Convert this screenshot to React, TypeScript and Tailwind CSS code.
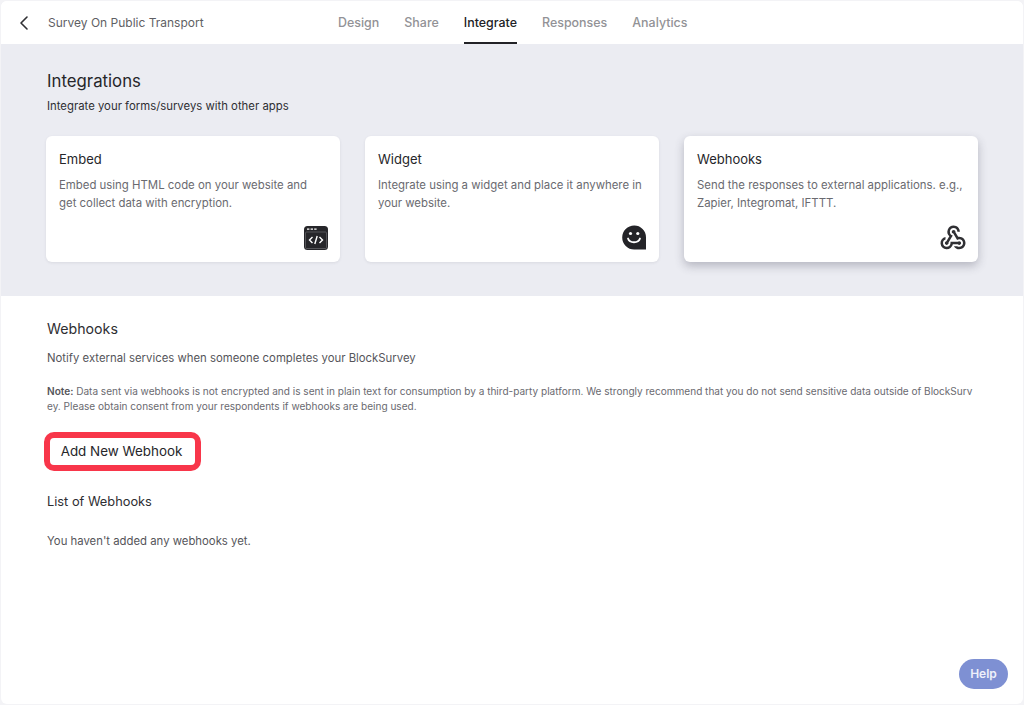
import { ChevronLeft } from "lucide-react";
import { MdOutlineWebhook } from "react-icons/md";

function EmbedIcon() {
  return (
    <svg width="24" height="24" viewBox="0 0 24 24">
      <rect x="0" y="0" width="24" height="24" rx="3.5" fill="#26262a" />
      <rect x="1.5" y="6" width="21" height="16.5" rx="1" fill="#26262a" stroke="#77777a" strokeWidth="0.6" />
      <rect x="3" y="2.4" width="2.4" height="1.5" fill="#ddd" />
      <rect x="6.6" y="2.4" width="2.4" height="1.5" fill="#ddd" />
      <rect x="10.2" y="2.4" width="2.4" height="1.5" fill="#ddd" />
      <path d="M8.5 11 L5.5 14 L8.5 17 M15.5 11 L18.5 14 L15.5 17 M13.2 10 L10.8 18" fill="none" stroke="#fff" strokeWidth="1.4" />
    </svg>
  );
}

function WidgetIcon() {
  return (
    <svg width="25" height="25" viewBox="0 0 25 25">
      <path d="M12.2 0.5 A11.7 11.7 0 0 1 24 12.2 V24.5 H12.2 A11.7 11.7 0 0 1 12.2 0.5 Z" fill="#242428" />
      <circle cx="8.5" cy="8.5" r="1.6" fill="#fff" />
      <circle cx="15.8" cy="8.5" r="1.6" fill="#fff" />
      <path d="M6 13.5 C7.5 18.5 16.5 18.5 18 13.5" fill="none" stroke="#fff" strokeWidth="1.8" strokeLinecap="round" />
    </svg>
  );
}

const cards = [
  {
    title: "Embed",
    text: "Embed using HTML code on your website and get collect data with encryption.",
    icon: <EmbedIcon />,
    active: false,
  },
  {
    title: "Widget",
    text: "Integrate using a widget and place it anywhere in your website.",
    icon: <WidgetIcon />,
    active: false,
  },
  {
    title: "Webhooks",
    text: "Send the responses to external applications. e.g., Zapier, Integromat, IFTTT.",
    icon: <MdOutlineWebhook className="block w-[30px] h-[30px] -mr-[2px] -mb-[3px] text-[#303034]" />,
    active: true,
  },
];

const tabs = ["Design", "Share", "Integrate", "Responses", "Analytics"];

export default function App() {
  return (
    <div className="w-[1024px] h-[705px] overflow-hidden bg-[#f3f3f6] p-[1px] font-['Inter',sans-serif]">
      <div className="flex flex-col h-full rounded-[6px] overflow-hidden bg-white">
        <header className="relative h-[43px] shrink-0 flex items-center pt-[1px] bg-white">
          <ChevronLeft className="w-[24px] h-[24px] ml-[11px] text-[#303034]" strokeWidth={1.6} />
          <span className="ml-[12px] text-[12px] text-[#5f5f64]">Survey On Public Transport</span>
          <nav className="absolute left-[337px] top-0 h-full flex gap-[25px]">
            {tabs.map((tab) => (
              <div
                key={tab}
                className={
                  tab === "Integrate"
                    ? "flex items-center h-full pt-[3px] border-b-2 border-[#222226] text-[12.45px] font-medium text-[#222226]"
                    : "flex items-center h-full pt-[3px] border-b-2 border-transparent text-[12.45px] font-medium text-[#929296]"
                }
              >
                {tab}
              </div>
            ))}
          </nav>
        </header>

        <section className="h-[252px] shrink-0 bg-[#ebecf2] pt-[26px] pl-[46px]">
          <h1 className="text-[16.8px] leading-[22px] text-[#26262a]">Integrations</h1>
          <p className="mt-[4px] text-[11.35px] leading-[20px] text-[#2e2e32]">Integrate your forms/surveys with other apps</p>
          <div className="mt-[20px] ml-[-1px] flex gap-[25px]">
            {cards.map((card) => (
              <div
                key={card.title}
                className={
                  card.active
                    ? "relative w-[294px] h-[126px] rounded-[6px] bg-white pl-[13px] pr-[14px] pt-[13px] shadow-[0_4px_10px_rgba(60,60,80,0.3)]"
                    : "relative w-[294px] h-[126px] rounded-[6px] bg-white pl-[13px] pr-[14px] pt-[13px] shadow-[0_1px_3px_rgba(60,60,80,0.1)]"
                }
              >
                <h2 className="text-[13px] leading-[20px] text-[#26262a]">{card.title}</h2>
                <p className="mt-[7px] text-[11.4px] leading-[18px] text-[#6a6a70]">{card.text}</p>
                <div className="absolute right-[12px] bottom-[12px]">{card.icon}</div>
              </div>
            ))}
          </div>
        </section>

        <section className="flex-1 relative pl-[46px] pr-[48px] pt-[24px]">
          <h2 className="text-[14.2px] leading-[18px] text-[#2e2e32]">Webhooks</h2>
          <p className="mt-[11px] text-[11.35px] leading-[18px] text-[#55555a]">Notify external services when someone completes your BlockSurvey</p>
          <p className="mt-[17px] text-[10.05px] leading-[15px] text-[#6a6a70] break-all">
            <b className="font-semibold text-[#55555a]">Note:</b> Data sent via webhooks is not encrypted and is sent in plain text for consumption by a third-party platform. We strongly recommend that you do not send sensitive data outside of BlockSurvey. Please obtain consent from your respondents if webhooks are being used.
          </p>
          <button className="mt-[18px] block ml-[-3px] pr-[2px] w-[157px] h-[39px] rounded-[10px] border-[6px] border-[#f8364a] bg-white text-[13.4px] text-[#26262a]">
            Add New Webhook
          </button>
          <h3 className="mt-[22px] text-[12.8px] leading-[18px] text-[#2e2e32]">List of Webhooks</h3>
          <p className="mt-[21px] text-[11.35px] leading-[18px] text-[#55555a]">You haven't added any webhooks yet.</p>
          <button className="absolute right-[15px] bottom-[15px] w-[49px] h-[30px] rounded-full bg-[#7e90d3] text-[12px] font-semibold text-[#eef0fa]">
            Help
          </button>
        </section>
      </div>
    </div>
  );
}
